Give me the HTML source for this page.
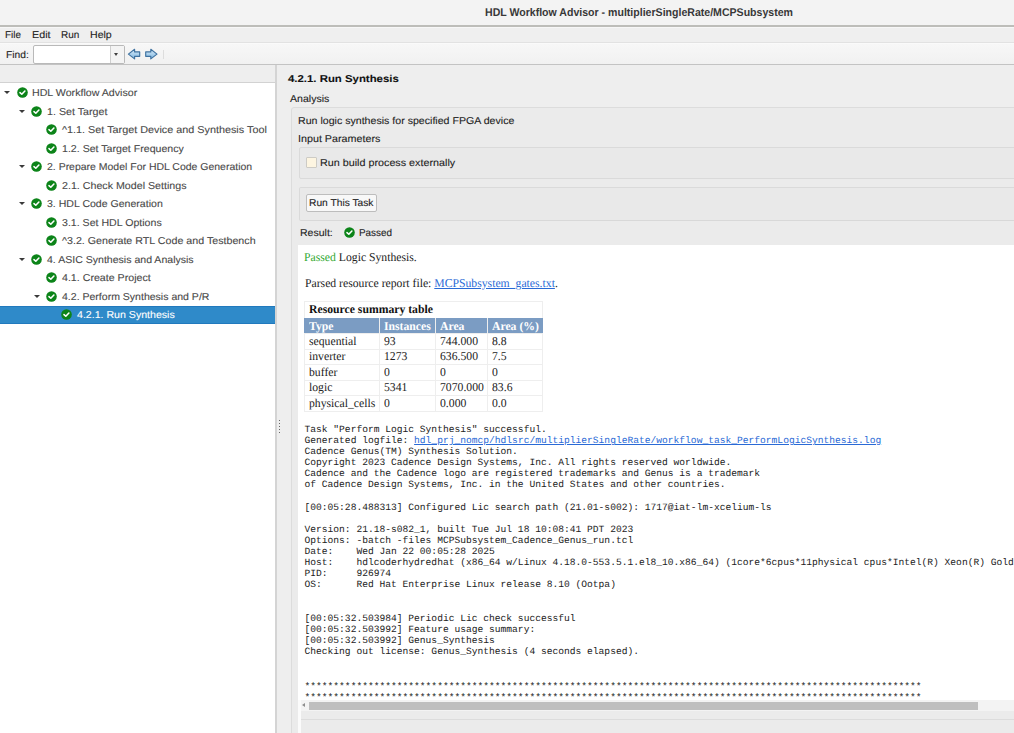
<!DOCTYPE html>
<html><head><meta charset="utf-8"><style>
*{box-sizing:border-box;margin:0;padding:0}
html,body{width:1014px;height:733px;overflow:hidden;background:#eeeeee;font-family:"Liberation Sans",sans-serif;color:#222;position:relative;text-rendering:geometricPrecision}
.a{position:absolute}
.u{position:absolute;font-size:10.0px;line-height:12px;white-space:nowrap;color:#222;transform-origin:0 0;-webkit-text-stroke:0.1px currentColor}
.ar{position:absolute;width:0;height:0;border-left:3px solid transparent;border-right:3px solid transparent;border-top:3.5px solid #3a3a3a}
.ck{position:absolute}
.ser{position:absolute;font-family:"Liberation Serif",serif;font-size:12.0px;line-height:14px;white-space:nowrap;color:#222;transform:scaleX(0.975);transform-origin:0 0}
#pre{position:absolute;left:6.5px;font-family:"Liberation Mono",monospace;font-size:9.62px;line-height:11.1px;white-space:pre;color:#222}
a{color:#2a6ad6;text-decoration:underline}
</style></head><body>
<div class="a" style="left:0;top:0;width:1014px;height:25px;background:#f3f3f3"></div>
<div class="a" style="left:484.8px;top:7px;font-size:11.2px;line-height:12px;font-weight:700;color:#383838;white-space:nowrap;transform-origin:0 0;transform:scaleX(0.9442)">HDL Workflow Advisor - multiplierSingleRate/MCPSubsystem</div>
<div class="a" style="left:0;top:25px;width:1014px;height:2px;background:#bdbdb9"></div>
<div class="a" style="left:0;top:27px;width:1014px;height:15px;background:#efefef;border-top:1px solid #f7f7f7"></div>
<div class="a" style="left:0;top:42px;width:1014px;height:1px;background:#e2e2e2"></div>
<div class="a" style="left:0;top:43px;width:1014px;height:21px;background:linear-gradient(#f7f7f7,#f1f1f1);border-top:1px solid #fafafa"></div>
<div class="a" style="left:0;top:64.2px;width:1014px;height:1.8px;background:#c3c3c3"></div>
<div class="a" style="left:33px;top:45px;width:92px;height:18.5px;background:#fff;border:1px solid #b9b9b9;border-radius:2px"><div class="a" style="left:76px;top:0;width:14px;height:16.5px;background:#f4f4f4;border-left:1px solid #cfcfcf"><div class="a" style="left:2.9px;top:7px;width:0;height:0;border-left:2.9px solid transparent;border-right:2.9px solid transparent;border-top:3.2px solid #404040"></div></div></div>
<svg class="a" style="left:127px;top:48px" width="15" height="12" viewBox="0 0 15 12">
<defs><linearGradient id="ag" x1="0" y1="0" x2="0" y2="1"><stop offset="0" stop-color="#d8ecfa"/><stop offset="1" stop-color="#7fb5df"/></linearGradient></defs>
<path d="M1.4 6.1 L7.6 1.3 L7.6 3.9 L12.7 3.9 L12.7 8.3 L7.6 8.3 L7.6 10.9 Z" fill="url(#ag)" stroke="#3f72a0" stroke-width="1.15" stroke-linejoin="round"/></svg>
<svg class="a" style="left:144.2px;top:48px" width="15" height="12" viewBox="0 0 15 12">
<path d="M13.0 6.1 L6.8 1.3 L6.8 3.9 L1.7 3.9 L1.7 8.3 L6.8 8.3 L6.8 10.9 Z" fill="url(#ag)" stroke="#3f72a0" stroke-width="1.15" stroke-linejoin="round"/></svg>
<div class="a" style="left:163px;top:50px;width:1px;height:9px;background:#dddddd"></div>
<div class="a" style="left:0;top:65px;width:275px;height:17px;background:#eeeeee"></div>
<div class="a" style="left:0;top:82px;width:275px;height:1px;background:#d2d2d2"></div>
<div class="a" style="left:0;top:83px;width:275px;height:650px;background:#fff"></div>
<div class="a" style="left:0;top:306px;width:276px;height:18px;background:#2f8ac9;border-top:1px solid #2179bd;border-bottom:1px solid #2179bd"></div>
<div class="ar" style="left:3.9px;top:91.00px"></div>
<svg class="ck" style="left:16.70px;top:87.00px" width="11" height="11" viewBox="0 0 11 11"><circle cx="5.5" cy="5.5" r="5.3" fill="#0c8419"/><path d="M3.0 5.6 L4.8 7.3 L7.9 4.0" fill="none" stroke="#fff" stroke-width="1.55" stroke-linecap="round" stroke-linejoin="round"/></svg>
<div class="ar" style="left:18.9px;top:109.50px"></div>
<svg class="ck" style="left:31.45px;top:105.50px" width="11" height="11" viewBox="0 0 11 11"><circle cx="5.5" cy="5.5" r="5.3" fill="#0c8419"/><path d="M3.0 5.6 L4.8 7.3 L7.9 4.0" fill="none" stroke="#fff" stroke-width="1.55" stroke-linecap="round" stroke-linejoin="round"/></svg>
<svg class="ck" style="left:46.20px;top:124.00px" width="11" height="11" viewBox="0 0 11 11"><circle cx="5.5" cy="5.5" r="5.3" fill="#0c8419"/><path d="M3.0 5.6 L4.8 7.3 L7.9 4.0" fill="none" stroke="#fff" stroke-width="1.55" stroke-linecap="round" stroke-linejoin="round"/></svg>
<svg class="ck" style="left:46.20px;top:142.50px" width="11" height="11" viewBox="0 0 11 11"><circle cx="5.5" cy="5.5" r="5.3" fill="#0c8419"/><path d="M3.0 5.6 L4.8 7.3 L7.9 4.0" fill="none" stroke="#fff" stroke-width="1.55" stroke-linecap="round" stroke-linejoin="round"/></svg>
<div class="ar" style="left:18.9px;top:165.00px"></div>
<svg class="ck" style="left:31.45px;top:161.00px" width="11" height="11" viewBox="0 0 11 11"><circle cx="5.5" cy="5.5" r="5.3" fill="#0c8419"/><path d="M3.0 5.6 L4.8 7.3 L7.9 4.0" fill="none" stroke="#fff" stroke-width="1.55" stroke-linecap="round" stroke-linejoin="round"/></svg>
<svg class="ck" style="left:46.20px;top:179.50px" width="11" height="11" viewBox="0 0 11 11"><circle cx="5.5" cy="5.5" r="5.3" fill="#0c8419"/><path d="M3.0 5.6 L4.8 7.3 L7.9 4.0" fill="none" stroke="#fff" stroke-width="1.55" stroke-linecap="round" stroke-linejoin="round"/></svg>
<div class="ar" style="left:18.9px;top:202.00px"></div>
<svg class="ck" style="left:31.45px;top:198.00px" width="11" height="11" viewBox="0 0 11 11"><circle cx="5.5" cy="5.5" r="5.3" fill="#0c8419"/><path d="M3.0 5.6 L4.8 7.3 L7.9 4.0" fill="none" stroke="#fff" stroke-width="1.55" stroke-linecap="round" stroke-linejoin="round"/></svg>
<svg class="ck" style="left:46.20px;top:216.50px" width="11" height="11" viewBox="0 0 11 11"><circle cx="5.5" cy="5.5" r="5.3" fill="#0c8419"/><path d="M3.0 5.6 L4.8 7.3 L7.9 4.0" fill="none" stroke="#fff" stroke-width="1.55" stroke-linecap="round" stroke-linejoin="round"/></svg>
<svg class="ck" style="left:46.20px;top:235.00px" width="11" height="11" viewBox="0 0 11 11"><circle cx="5.5" cy="5.5" r="5.3" fill="#0c8419"/><path d="M3.0 5.6 L4.8 7.3 L7.9 4.0" fill="none" stroke="#fff" stroke-width="1.55" stroke-linecap="round" stroke-linejoin="round"/></svg>
<div class="ar" style="left:18.9px;top:257.50px"></div>
<svg class="ck" style="left:31.45px;top:253.50px" width="11" height="11" viewBox="0 0 11 11"><circle cx="5.5" cy="5.5" r="5.3" fill="#0c8419"/><path d="M3.0 5.6 L4.8 7.3 L7.9 4.0" fill="none" stroke="#fff" stroke-width="1.55" stroke-linecap="round" stroke-linejoin="round"/></svg>
<svg class="ck" style="left:46.20px;top:272.00px" width="11" height="11" viewBox="0 0 11 11"><circle cx="5.5" cy="5.5" r="5.3" fill="#0c8419"/><path d="M3.0 5.6 L4.8 7.3 L7.9 4.0" fill="none" stroke="#fff" stroke-width="1.55" stroke-linecap="round" stroke-linejoin="round"/></svg>
<div class="ar" style="left:33.9px;top:294.50px"></div>
<svg class="ck" style="left:46.20px;top:290.50px" width="11" height="11" viewBox="0 0 11 11"><circle cx="5.5" cy="5.5" r="5.3" fill="#0c8419"/><path d="M3.0 5.6 L4.8 7.3 L7.9 4.0" fill="none" stroke="#fff" stroke-width="1.55" stroke-linecap="round" stroke-linejoin="round"/></svg>
<svg class="ck" style="left:60.95px;top:309.00px" width="11" height="11" viewBox="0 0 11 11"><circle cx="5.5" cy="5.5" r="5.3" fill="#0c8419"/><path d="M3.0 5.6 L4.8 7.3 L7.9 4.0" fill="none" stroke="#fff" stroke-width="1.55" stroke-linecap="round" stroke-linejoin="round"/></svg>
<div class="a" style="left:275px;top:65px;width:2px;height:668px;background:#d4d4d4"></div>
<div class="a" style="left:277px;top:65px;width:737px;height:668px;background:#eeeeee"></div>
<div class="a" style="left:291px;top:107px;width:740px;height:640px;background:#ebebeb;border:1px solid #dcdcdc;border-radius:3px"></div>
<div class="a" style="left:299px;top:147px;width:730px;height:32px;background:#e9e9e9;border:1px solid #dadada;border-radius:2px"></div>
<div class="a" style="left:306px;top:157px;width:11px;height:11px;background:#fdf5e1;border:1px solid #cdcbc5;border-radius:1px"></div>
<div class="a" style="left:299px;top:186.5px;width:730px;height:34.5px;background:#e9e9e9;border:1px solid #dadada;border-bottom:1.5px solid #d8d8d8;border-radius:2px"></div>
<div class="a" style="left:306px;top:194px;width:71px;height:18px;background:#f8f8f8;border:1px solid #bdbdbd;border-radius:2px"></div>
<svg class="ck" style="left:343.70px;top:226.80px" width="11" height="11" viewBox="0 0 11 11"><circle cx="5.5" cy="5.5" r="5.3" fill="#0c8419"/><path d="M3.0 5.6 L4.8 7.3 L7.9 4.0" fill="none" stroke="#fff" stroke-width="1.55" stroke-linecap="round" stroke-linejoin="round"/></svg>
<div class="a" style="left:278.6px;top:419.90px;width:1.3px;height:1.3px;background:#666"></div>
<div class="a" style="left:278.6px;top:422.85px;width:1.3px;height:1.3px;background:#666"></div>
<div class="a" style="left:278.6px;top:425.80px;width:1.3px;height:1.3px;background:#666"></div>
<div class="a" style="left:278.6px;top:428.75px;width:1.3px;height:1.3px;background:#666"></div>
<div class="a" style="left:278.6px;top:431.70px;width:1.3px;height:1.3px;background:#666"></div>
<div class="a" style="left:298px;top:245px;width:716px;height:455px;background:#fff;overflow:hidden">
<div class="ser" style="left:5.5px;top:5px;color:#222"><span style="color:#2fa82f">Passed</span> Logic Synthesis.</div>
<div class="ser" style="left:6.5px;top:31px;color:#222">Parsed resource report file: <a>MCPSubsystem_gates.txt</a>.</div>
<div class="a" style="left:6.4px;top:56.3px;width:238.6px;height:110.4px;border:1px solid #eeeeee"></div>
<div class="a" style="left:6.4px;top:72.8px;width:238.6px;height:15.2px;background:#7b9cc3"></div>
<div class="a" style="left:6.4px;top:87.8px;width:238.6px;height:1px;background:#eeeeee"></div>
<div class="a" style="left:6.4px;top:103.5px;width:238.6px;height:1px;background:#eeeeee"></div>
<div class="a" style="left:6.4px;top:119.4px;width:238.6px;height:1px;background:#eeeeee"></div>
<div class="a" style="left:6.4px;top:134.9px;width:238.6px;height:1px;background:#eeeeee"></div>
<div class="a" style="left:6.4px;top:150.4px;width:238.6px;height:1px;background:#eeeeee"></div>
<div class="a" style="left:81.2px;top:72.8px;width:1px;height:93.4px;background:#eeeeee"></div>
<div class="a" style="left:136.5px;top:72.8px;width:1px;height:93.4px;background:#eeeeee"></div>
<div class="a" style="left:188.7px;top:72.8px;width:1px;height:93.4px;background:#eeeeee"></div>
<div class="ser" style="left:10.7px;top:57px;font-weight:700;color:#111">Resource summary table</div>
<div class="ser" style="left:10.9px;top:74px;font-weight:700;color:#fff">Type</div>
<div class="ser" style="left:86.2px;top:74px;font-weight:700;color:#fff">Instances</div>
<div class="ser" style="left:141.5px;top:74px;font-weight:700;color:#fff">Area</div>
<div class="ser" style="left:193.7px;top:74px;font-weight:700;color:#fff">Area (%)</div>
<div class="ser" style="left:10.9px;top:89px;color:#222">sequential</div>
<div class="ser" style="left:86.2px;top:89px;color:#222">93</div>
<div class="ser" style="left:141.5px;top:89px;color:#222">744.000</div>
<div class="ser" style="left:193.7px;top:89px;color:#222">8.8</div>
<div class="ser" style="left:10.9px;top:104px;color:#222">inverter</div>
<div class="ser" style="left:86.2px;top:104px;color:#222">1273</div>
<div class="ser" style="left:141.5px;top:104px;color:#222">636.500</div>
<div class="ser" style="left:193.7px;top:104px;color:#222">7.5</div>
<div class="ser" style="left:10.9px;top:120px;color:#222">buffer</div>
<div class="ser" style="left:86.2px;top:120px;color:#222">0</div>
<div class="ser" style="left:141.5px;top:120px;color:#222">0</div>
<div class="ser" style="left:193.7px;top:120px;color:#222">0</div>
<div class="ser" style="left:10.9px;top:135px;color:#222">logic</div>
<div class="ser" style="left:86.2px;top:135px;color:#222">5341</div>
<div class="ser" style="left:141.5px;top:135px;color:#222">7070.000</div>
<div class="ser" style="left:193.7px;top:135px;color:#222">83.6</div>
<div class="ser" style="left:10.9px;top:151px;color:#222">physical_cells</div>
<div class="ser" style="left:86.2px;top:151px;color:#222">0</div>
<div class="ser" style="left:141.5px;top:151px;color:#222">0.000</div>
<div class="ser" style="left:193.7px;top:151px;color:#222">0.0</div>
<div id="pre" style="top:179px">Task "Perform Logic Synthesis" successful.
Generated logfile: <a>hdl_prj_nomcp/hdlsrc/multiplierSingleRate/workflow_task_PerformLogicSynthesis.log</a>
Cadence Genus(TM) Synthesis Solution.
Copyright 2023 Cadence Design Systems, Inc. All rights reserved worldwide.
Cadence and the Cadence logo are registered trademarks and Genus is a trademark
of Cadence Design Systems, Inc. in the United States and other countries.

[00:05:28.488313] Configured Lic search path (21.01-s002): 1717@iat-lm-xcelium-ls

Version: 21.18-s082_1, built Tue Jul 18 10:08:41 PDT 2023
Options: -batch -files MCPSubsystem_Cadence_Genus_run.tcl
Date:    Wed Jan 22 00:05:28 2025
Host:    hdlcoderhydredhat (x86_64 w/Linux 4.18.0-553.5.1.el8_10.x86_64) (1core*6cpus*11physical cpus*Intel(R) Xeon(R) Gold 6140 CPU @ 2.30GHz 24576KB) (65386920KB)
PID:     926974
OS:      Red Hat Enterprise Linux release 8.10 (Ootpa)


[00:05:32.503984] Periodic Lic check successful
[00:05:32.503992] Feature usage summary:
[00:05:32.503992] Genus_Synthesis
Checking out license: Genus_Synthesis (4 seconds elapsed).


<span style="position:relative;top:1.8px">***********************************************************************************************************</span>
<span style="position:relative;top:1.8px">***********************************************************************************************************</span>
</div>
</div>
<div class="a" style="left:298px;top:700px;width:3.2px;height:33px;background:#fbfbfb"></div>
<div class="a" style="left:301px;top:700px;width:713px;height:10.5px;background:#f3f3f3"></div>
<div class="a" style="left:309px;top:702px;width:669px;height:8px;background:#bfbfbf"></div>
<div class="a" style="left:302px;top:703.3px;width:0;height:0;border-top:2.7px solid transparent;border-bottom:2.7px solid transparent;border-right:3.2px solid #8e8e8e"></div>
<div class="a" style="left:301px;top:710.5px;width:713px;height:9.5px;background:#ebebeb;border-bottom:1px solid #dcdcdc"></div>
<div class="u" style="left:5.2px;top:30px;color:#222;transform:scaleX(0.9913)">File</div>
<div class="u" style="left:31.8px;top:30px;color:#222;transform:scaleX(1.0734)">Edit</div>
<div class="u" style="left:61.4px;top:30px;color:#222;transform:scaleX(0.9974)">Run</div>
<div class="u" style="left:90.0px;top:30px;color:#222;transform:scaleX(1.0577)">Help</div>
<div class="u" style="left:6.0px;top:50px;color:#222;transform:scaleX(1.0246)">Find:</div>
<div class="u" style="left:32.1px;top:88px;color:#484848;transform:scaleX(1.0638)">HDL Workflow Advisor</div>
<div class="u" style="left:47.1px;top:107px;color:#484848;transform:scaleX(1.0683)">1. Set Target</div>
<div class="u" style="left:62.1px;top:125px;color:#484848;transform:scaleX(1.0812)">^1.1. Set Target Device and Synthesis Tool</div>
<div class="u" style="left:62.1px;top:144px;color:#484848;transform:scaleX(1.0607)">1.2. Set Target Frequency</div>
<div class="u" style="left:47.1px;top:162px;color:#484848;transform:scaleX(1.0474)">2. Prepare Model For HDL Code Generation</div>
<div class="u" style="left:62.1px;top:181px;color:#484848;transform:scaleX(1.0667)">2.1. Check Model Settings</div>
<div class="u" style="left:47.1px;top:199px;color:#484848;transform:scaleX(1.0553)">3. HDL Code Generation</div>
<div class="u" style="left:62.1px;top:218px;color:#484848;transform:scaleX(1.0591)">3.1. Set HDL Options</div>
<div class="u" style="left:62.1px;top:236px;color:#484848;transform:scaleX(1.0677)">^3.2. Generate RTL Code and Testbench</div>
<div class="u" style="left:47.1px;top:255px;color:#484848;transform:scaleX(1.0553)">4. ASIC Synthesis and Analysis</div>
<div class="u" style="left:62.1px;top:273px;color:#484848;transform:scaleX(1.0637)">4.1. Create Project</div>
<div class="u" style="left:62.1px;top:292px;color:#484848;transform:scaleX(1.0525)">4.2. Perform Synthesis and P/R</div>
<div class="u" style="left:77.1px;top:310px;color:#ffffff;transform:scaleX(1.0591)">4.2.1. Run Synthesis</div>
<div class="u" style="left:288.0px;top:74px;font-weight:700;color:#111;transform:scaleX(1.1390)">4.2.1. Run Synthesis</div>
<div class="u" style="left:289.7px;top:94px;color:#222;transform:scaleX(1.0562)">Analysis</div>
<div class="u" style="left:297.8px;top:116px;color:#222;transform:scaleX(1.0606)">Run logic synthesis for specified FPGA device</div>
<div class="u" style="left:297.8px;top:134px;color:#222;transform:scaleX(1.0741)">Input Parameters</div>
<div class="u" style="left:320.3px;top:158px;color:#222;transform:scaleX(1.0760)">Run build process externally</div>
<div class="u" style="left:308.9px;top:198px;color:#222;transform:scaleX(1.0238)">Run This Task</div>
<div class="u" style="left:299.7px;top:228px;color:#222;transform:scaleX(1.0512)">Result:</div>
<div class="u" style="left:359.2px;top:228px;color:#222;transform:scaleX(0.9911)">Passed</div>
</body></html>
